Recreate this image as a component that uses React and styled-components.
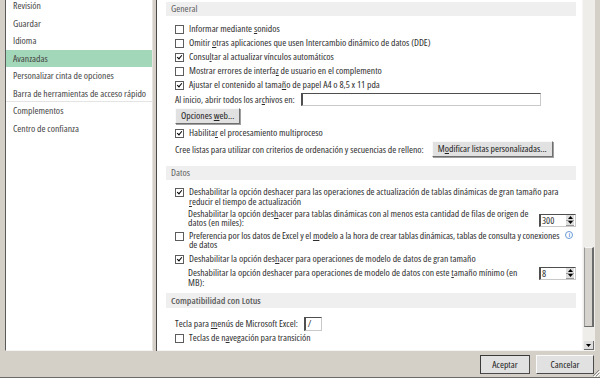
import React from "react";
import styled, { createGlobalStyle } from "styled-components";

const GlobalStyle = createGlobalStyle`
  body {
    margin: 0;
    background: #d4d0c8;
    font-family: "Open Sans", "Noto Sans", sans-serif;
    font-stretch: 75%;
    font-size: 9.7px;
    color: #2e2e2e;
  }
  u { text-underline-offset: 1px; }
`;

const navItems = [
  { label: "Revisión" },
  { label: "Guardar" },
  { label: "Idioma" },
  { label: "Avanzadas", active: true },
  { label: "Personalizar cinta de opciones" },
  { label: "Barra de herramientas de acceso rápido", divider: true },
  { label: "Complementos" },
  { label: "Centro de confianza" },
];

export default function App() {
  return (
    <>
      <GlobalStyle />
      <Window>
        <Main>
          <Nav>
            <NavList>
              {navItems.map((item) => (
                <NavItem key={item.label} $active={item.active} $divider={item.divider}>
                  {item.label}
                </NavItem>
              ))}
            </NavList>
          </Nav>
          <Gutter />
          <Panel>
            <Scroll>
              <SectionHead>General</SectionHead>
              <Group $top={6}>
                <CheckRow>
                  <Box />
                  <span>Informar mediante <u>s</u>onidos</span>
                </CheckRow>
                <CheckRow>
                  <Box />
                  <span>Omitir <u>o</u>tras aplicaciones que usen Intercambio dinámico de datos (DDE)</span>
                </CheckRow>
                <CheckRow>
                  <Box $checked />
                  <span>Consu<u>l</u>tar al actualizar vínculos automáticos</span>
                </CheckRow>
                <CheckRow>
                  <Box />
                  <span>Mostrar errores de interfa<u>z</u> de usuario en el complemento</span>
                </CheckRow>
                <CheckRow>
                  <Box $checked />
                  <span>Ajustar el contenido al tama<u>ñ</u>o de papel A4 o 8,5 x 11 pda</span>
                </CheckRow>
              </Group>
              <FieldRow>
                <span>Al inicio, abrir todos los ar<u>c</u>hivos en:</span>
                <TextField $width={240} />
              </FieldRow>
              <ButtonRow>
                <Button>Opciones <u>w</u>eb...</Button>
              </ButtonRow>
              <CheckRow>
                <Box $checked />
                <span>Habilita<u>r</u> el procesamiento multiproceso</span>
              </CheckRow>
              <ListRow>
                <span>Cree listas para utilizar con criterios de ordenación y secuencias de relleno:</span>
                <Button>M<u>o</u>dificar listas personalizadas...</Button>
              </ListRow>

              <SectionHead $top={8}>Datos</SectionHead>
              <Group $top={5}>
                <CheckRow $pb={1}>
                  <Box $checked />
                  <span>
                    Deshabilitar la opción deshacer para las operaciones de actualización de tablas dinámicas de gran tamaño para
                    <br />
                    <u>r</u>educir el tiempo de actualización
                  </span>
                </CheckRow>
                <IndentRow $lh={9} $pt={1} $pb={2} $spin="end">
                  <span>
                    Deshabilitar la opción des<u>h</u>acer para tablas dinámicas con al menos esta cantidad de filas de origen de
                    <br />
                    datos (en miles):
                  </span>
                  <Spinner value="300" />
                </IndentRow>
                <CheckRow $lh={9} $pb={3} $tight>
                  <Box />
                  <span>
                    Preferencia por los datos de Excel y el <u>m</u>odelo a la hora de crear tablas dinámicas, tablas de consulta y conexiones
                    <br />
                    de datos
                  </span>
                  <Info>i</Info>
                </CheckRow>
                <CheckRow>
                  <Box $checked />
                  <span>Deshabilitar la opción des<u>h</u>acer para operaciones de modelo de datos de gran tamaño</span>
                </CheckRow>
                <IndentRow $lh={10} $pt={2} $pb={0} $spin="start">
                  <span>
                    Deshabilitar la opción deshacer para operaciones de modelo de datos con este <u>t</u>amaño mínimo (en
                    <br />
                    MB):
                  </span>
                  <Spinner value="8" />
                </IndentRow>
              </Group>

              <SectionHead $top={5} $bold>Compatibilidad con Lotus</SectionHead>
              <FieldRow $top={8}>
                <span>Tecla para <u>m</u>enús de Microsoft Excel:</span>
                <TextField $width={18} $height={14}>/</TextField>
              </FieldRow>
              <CheckRow>
                <Box />
                <span>Teclas de n<u>a</u>vegación para transición</span>
              </CheckRow>
            </Scroll>
            <ScrollBar>
              <Track>
                <Thumb />
              </Track>
              <ArrowBtn>
                <svg width="5" height="3" viewBox="0 0 5 3">
                  <path d="M0 0h5L2.5 3z" fill="#000" />
                </svg>
              </ArrowBtn>
            </ScrollBar>
          </Panel>
        </Main>
        <Footer>
          <FooterButton $default>Aceptar</FooterButton>
          <FooterButton>Cancelar</FooterButton>
          <Grip>
            <svg width="8" height="8" viewBox="0 0 8 8">
              <path d="M7 1L1 7M7 4L4 7" stroke="#8a8a8a" strokeWidth="1" />
              <path d="M8 2L2 8M8 5L5 8" stroke="#fff" strokeWidth="1" />
            </svg>
          </Grip>
        </Footer>
      </Window>
    </>
  );
}

function Spinner({ value }) {
  return (
    <SpinBox>
      <SpinValue>{value}</SpinValue>
      <SpinButtons>
        <SpinArrow>
          <svg width="5" height="3" viewBox="0 0 5 3">
            <path d="M2.5 0L5 3H0z" fill="#000" />
          </svg>
        </SpinArrow>
        <SpinArrow>
          <svg width="5" height="3" viewBox="0 0 5 3">
            <path d="M0 0h5L2.5 3z" fill="#000" />
          </svg>
        </SpinArrow>
      </SpinButtons>
    </SpinBox>
  );
}

const Window = styled.div`
  width: 600px;
  height: 378px;
  display: flex;
  flex-direction: column;
  overflow: hidden;
  box-sizing: border-box;
  border-bottom: 1px solid #6b6b6b;
`;

const Main = styled.div`
  height: 351px;
  display: flex;
  padding: 0 5px 0 5px;
`;

const Nav = styled.div`
  flex: none;
  width: 146px;
  background: #fff;
  border-left: 1px solid #5a5a5a;
  border-bottom: 1px solid #f4f4f4;
  border-right: 1px solid #e6e4df;
  overflow: hidden;
`;

const NavList = styled.div`
  margin-top: -3px;
  display: flex;
  flex-direction: column;
`;

const NavItem = styled.div`
  height: 17.5px;
  line-height: 17.5px;
  padding-left: 7px;
  color: #444;
  white-space: nowrap;
  background: ${(p) => (p.$active ? "#a3d7b9" : "transparent")};
  box-shadow: ${(p) => (p.$divider ? "inset 0 -1px 0 #e4e4e4" : "none")};
`;

const Gutter = styled.div`
  flex: none;
  width: 3px;
  border-right: 1px solid #4a4a4a;
`;

const Panel = styled.div`
  flex: 1;
  min-width: 0;
  display: flex;
  background: #fff;
  border-bottom: 1px solid #f4f4f4;
`;

const Scroll = styled.div`
  flex: 1;
  min-width: 0;
  overflow: hidden;
  padding: 2px 6px 0 9px;
  display: flex;
  flex-direction: column;
`;

const SectionHead = styled.div`
  flex: none;
  height: ${(p) => (p.$bold ? 15 : 14)}px;
  line-height: ${(p) => (p.$bold ? 15 : 14)}px;
  margin-top: ${(p) => p.$top || 0}px;
  padding-left: 5px;
  background: #efefef;
  color: #5d5d5d;
  font-weight: ${(p) => (p.$bold ? 600 : 400)};
`;

const Group = styled.div`
  margin-top: ${(p) => p.$top || 0}px;
  display: flex;
  flex-direction: column;
`;

const CheckRow = styled.div`
  display: flex;
  align-items: flex-start;
  gap: 5px;
  padding: 2px 0 ${(p) => p.$pb ?? 2}px 9px;
  line-height: ${(p) => p.$lh || 10}px;
  letter-spacing: ${(p) => (p.$tight ? "-0.07px" : "normal")};
  white-space: nowrap;
`;

const Box = styled.span`
  flex: none;
  width: 7px;
  height: 7px;
  margin-top: 1px;
  border: 1px solid #5c5c5c;
  background: #fff;
  position: relative;

  &::after {
    content: "";
    display: ${(p) => (p.$checked ? "block" : "none")};
    position: absolute;
    left: 1.5px;
    top: 0px;
    width: 2px;
    height: 4px;
    border: solid #000;
    border-width: 0 1.6px 1.6px 0;
    transform: rotate(40deg);
  }
`;

const IndentRow = styled.div`
  display: flex;
  align-items: ${(p) => (p.$spin === "end" ? "flex-end" : "flex-start")};
  justify-content: space-between;
  padding: ${(p) => p.$pt}px 0 ${(p) => p.$pb}px 22px;
  line-height: ${(p) => p.$lh}px;
  white-space: nowrap;

  & > div {
    margin-top: ${(p) => (p.$spin === "start" ? -1 : 0)}px;
  }
`;

const FieldRow = styled.div`
  flex: none;
  display: flex;
  align-items: center;
  gap: 6px;
  margin-top: ${(p) => p.$top || 0}px;
  padding-left: 9px;
  height: 15px;
  white-space: nowrap;
`;

const TextField = styled.div`
  width: ${(p) => p.$width}px;
  height: ${(p) => p.$height || 13}px;
  box-sizing: border-box;
  border: 1px solid #c9c9c9;
  border-top-color: #4f4f4f;
  border-left-color: #4f4f4f;
  border-left-width: 2px;
  background: #fff;
  padding-left: 2px;
  line-height: 11px;
`;

const ButtonRow = styled.div`
  flex: none;
  padding: 1px 0 2px 9px;
  display: flex;
`;

const Button = styled.div`
  height: 16px;
  box-sizing: border-box;
  padding: 0 5px;
  line-height: 14px;
  background: #e1e1e1;
  border: 1px solid #fafafa;
  border-right-color: #6f6f6f;
  border-bottom-color: #6f6f6f;
  box-shadow: 1px 1px 0 #a0a0a0;
  color: #202020;
  white-space: nowrap;
`;

const ListRow = styled.div`
  flex: none;
  display: flex;
  align-items: center;
  gap: 8px;
  padding-left: 9px;
  height: 18px;
  white-space: nowrap;
`;

const SpinBox = styled.div`
  width: 37px;
  height: 13px;
  box-sizing: border-box;
  display: flex;
  border: 1px solid #c9c9c9;
  border-top-color: #4f4f4f;
  border-left: 2px solid #4f4f4f;
  background: #fff;
`;

const SpinValue = styled.span`
  flex: 1;
  line-height: 11px;
  padding-left: 1px;
`;

const SpinButtons = styled.div`
  width: 8px;
  display: flex;
  flex-direction: column;
  margin-right: 1px;
`;

const SpinArrow = styled.div`
  flex: 1;
  display: flex;
  align-items: center;
  justify-content: center;
  background: #dedede;
  border-bottom: 1px solid #9a9a9a;
`;

const Info = styled.span`
  flex: none;
  margin-left: 1px;
  width: 6px;
  height: 6px;
  border: 1px solid #6b9bd8;
  border-radius: 50%;
  color: #3d7bd0;
  font-size: 5px;
  line-height: 6px;
  text-align: center;
  font-weight: 700;
`;

const ScrollBar = styled.div`
  flex: none;
  width: 12px;
  display: flex;
  flex-direction: column;
  background: #eeedea;
  border-left: 1px solid #f6f6f6;
`;

const Track = styled.div`
  flex: 1;
  display: flex;
  flex-direction: column;
  justify-content: flex-end;
  padding-bottom: 14px;
`;

const Thumb = styled.div`
  height: 80px;
  margin: 0 1px;
  box-sizing: border-box;
  background: #d6d3ce;
  border: 1px solid #f6f6f6;
  border-right: 2px solid #6b6b6b;
  border-bottom: 1px solid #6b6b6b;
  border-left: 1px solid #9a9a9a;
`;

const ArrowBtn = styled.div`
  height: 8px;
  margin: 0 1px;
  display: flex;
  align-items: center;
  justify-content: center;
  background: #dedede;
  border-right: 1px solid #6b6b6b;
  border-bottom: 1px solid #6b6b6b;
`;

const Footer = styled.div`
  flex: 1;
  display: flex;
  justify-content: flex-end;
  align-items: center;
  gap: 6px;
  padding-right: 6px;
  position: relative;
`;

const FooterButton = styled.div`
  width: ${(p) => (p.$default ? 50 : 58)}px;
  height: 19px;
  box-sizing: border-box;
  text-align: center;
  line-height: 17px;
  background: #e1e1e1;
  border: 1px solid ${(p) => (p.$default ? "#3a3a3a" : "#fafafa")};
  border-right-color: #4a4a4a;
  border-bottom-color: #4a4a4a;
  color: #202020;
`;

const Grip = styled.div`
  position: absolute;
  right: 0;
  bottom: 0;
  width: 8px;
  height: 8px;
  display: flex;
`;
